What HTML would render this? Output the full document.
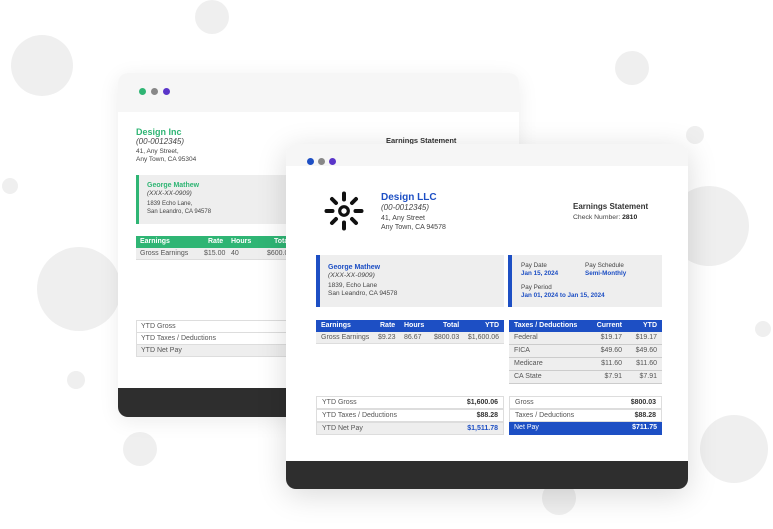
<!DOCTYPE html>
<html><head><meta charset="utf-8"><style>
*{margin:0;padding:0;box-sizing:border-box}
body{width:773px;height:529px;background:#fff;position:relative;overflow:hidden;font-family:"Liberation Sans",Arial,sans-serif;color:#333}
.c{position:absolute;border-radius:50%;background:#efefef}
.a{position:absolute;white-space:nowrap}
.card{position:absolute;background:#fff;border-radius:10px;overflow:hidden}
.hd{position:absolute;left:0;top:0;right:0;background:#f6f6f6}
.ft{position:absolute;left:0;right:0;bottom:0;background:#2e2e2e}
.dot{position:absolute;width:7px;height:7px;border-radius:50%}
.row{position:absolute;height:12px;font-size:7px;line-height:12px}
</style></head><body>
<div class="c" style="left:195px;top:0;width:34px;height:34px"></div>
<div class="c" style="left:11px;top:35px;width:62px;height:61px"></div>
<div class="c" style="left:615px;top:51px;width:34px;height:34px"></div>
<div class="c" style="left:2px;top:178px;width:16px;height:16px"></div>
<div class="c" style="left:686px;top:126px;width:18px;height:18px"></div>
<div class="c" style="left:669px;top:186px;width:80px;height:80px"></div>
<div class="c" style="left:37px;top:247px;width:84px;height:84px"></div>
<div class="c" style="left:755px;top:321px;width:16px;height:16px"></div>
<div class="c" style="left:67px;top:371px;width:18px;height:18px"></div>
<div class="c" style="left:123px;top:432px;width:34px;height:34px"></div>
<div class="c" style="left:542px;top:481px;width:34px;height:34px"></div>
<div class="c" style="left:700px;top:415px;width:68px;height:68px"></div>

<!-- back card -->
<div class="card" style="left:118px;top:73px;width:401px;height:344px;box-shadow:0 4px 20px rgba(0,0,0,.08)">
 <div class="hd" style="height:39px"></div>
 <div class="dot" style="left:21px;top:15px;background:#2fb574"></div>
 <div class="dot" style="left:33px;top:15px;background:#888"></div>
 <div class="dot" style="left:45px;top:15px;background:#5a35c9"></div>
 <div class="a" style="left:18px;top:54px;font-size:9px;font-weight:bold;color:#2fb574">Design Inc</div>
 <div class="a" style="left:18px;top:64px;font-size:8px;font-style:italic;color:#444">(00-0012345)</div>
 <div class="a" style="left:18px;top:75px;font-size:6.5px;line-height:8px;color:#444">41, Any Street,<br>Any Town, CA 95304</div>
 <div class="a" style="left:268px;top:63px;font-size:7.5px;font-weight:bold;color:#333">Earnings Statement</div>
 <div style="position:absolute;left:18px;top:102px;width:200px;height:49px;background:#eee;border-left:3px solid #2fb574"></div>
 <div class="a" style="left:29px;top:109px;font-size:7px;font-weight:bold;color:#2fb574">George Mathew</div>
 <div class="a" style="left:29px;top:117px;font-size:6.5px;font-style:italic;color:#444">(XXX-XX-0909)</div>
 <div class="a" style="left:29px;top:127px;font-size:6px;line-height:8px;color:#444">1839 Echo Lane,<br>San Leandro, CA 94578</div>
 <div class="row" style="left:18px;top:163px;width:200px;background:#2fb574;color:#fff;font-weight:bold"><span class="a" style="left:4px">Earnings</span><span class="a" style="left:72px">Rate</span><span class="a" style="left:95px">Hours</span><span class="a" style="left:138px">Total</span></div>
 <div class="row" style="left:18px;top:175px;width:200px;background:#eee;border-bottom:1px solid #ddd;color:#555"><span class="a" style="left:4px">Gross Earnings</span><span class="a" style="left:68px">$15.00</span><span class="a" style="left:95px">40</span><span class="a" style="left:131px">$600.00</span></div>
 <div class="row" style="left:18px;top:247px;width:200px;border:1px solid #ddd;color:#555;height:13px"><span class="a" style="left:4px">YTD Gross</span></div>
 <div class="row" style="left:18px;top:259px;width:200px;border:1px solid #ddd;color:#555;height:13px"><span class="a" style="left:4px">YTD Taxes / Deductions</span></div>
 <div class="row" style="left:18px;top:271px;width:200px;border:1px solid #ddd;background:#eee;color:#555;height:13px"><span class="a" style="left:4px">YTD Net Pay</span></div>
 <div class="ft" style="height:29px"></div>
</div>

<!-- front card -->
<div class="card" style="left:286px;top:144px;width:402px;height:345px;box-shadow:0 6px 30px rgba(0,0,0,.15)">
 <div class="hd" style="height:22px"></div>
 <div class="dot" style="left:21px;top:14px;background:#1d4fc4"></div>
 <div class="dot" style="left:32px;top:14px;background:#888"></div>
 <div class="dot" style="left:43px;top:14px;background:#5a35c9"></div>
 <svg style="position:absolute;left:38px;top:47px" width="40" height="40" viewBox="0 0 40 40"><g stroke="#111" stroke-width="4" stroke-linecap="round" fill="none"><circle cx="20" cy="20" r="4.3" stroke-width="3.2"/><path d="M20 2.5v6M20 31.5v6M2.5 20h6M31.5 20h6M8 8l4 4M28 28l4 4M32 8l-4 4M12 28l-4 4"/></g></svg>
 <div class="a" style="left:95px;top:48px;font-size:10px;font-weight:bold;color:#1d4fc4">Design LLC</div>
 <div class="a" style="left:95px;top:59px;font-size:8px;font-style:italic;color:#444">(00-0012345)</div>
 <div class="a" style="left:95px;top:71px;font-size:7px;line-height:8.5px;color:#444">41, Any Street<br>Any Town, CA 94578</div>
 <div class="a" style="left:287px;top:58px;font-size:8px;font-weight:bold;color:#333">Earnings Statement</div>
 <div class="a" style="left:287px;top:70px;font-size:6.8px;color:#444">Check Number: <b style="color:#222">2810</b></div>
 <div style="position:absolute;left:30px;top:111px;width:188px;height:52px;background:#eee;border-left:4px solid #1d4fc4"></div>
 <div class="a" style="left:42px;top:120px;font-size:7px;font-weight:bold;color:#1d4fc4">George Mathew</div>
 <div class="a" style="left:42px;top:128px;font-size:6.8px;font-style:italic;color:#444">(XXX-XX-0909)</div>
 <div class="a" style="left:42px;top:138px;font-size:6.5px;line-height:8px;color:#444">1839, Echo Lane<br>San Leandro, CA 94578</div>
 <div style="position:absolute;left:222px;top:111px;width:154px;height:52px;background:#eee;border-left:4px solid #1d4fc4"></div>
 <div class="a" style="left:235px;top:118px;font-size:6.3px;line-height:8px;color:#444">Pay Date<br><b style="color:#1d4fc4">Jan 15, 2024</b></div>
 <div class="a" style="left:299px;top:118px;font-size:6.3px;line-height:8px;color:#444">Pay Schedule<br><b style="color:#1d4fc4">Semi-Monthly</b></div>
 <div class="a" style="left:235px;top:140px;font-size:6.3px;line-height:8px;color:#444">Pay Period<br><b style="color:#1d4fc4">Jan 01, 2024 to Jan 15, 2024</b></div>

 <div class="row" style="left:30px;top:176px;width:188px;background:#1d4fc4;color:#fff;font-weight:bold"><span class="a" style="left:5px">Earnings</span><span class="a" style="left:64px">Rate</span><span class="a" style="left:88px">Hours</span><span class="a" style="left:127px">Total</span><span class="a" style="right:5px">YTD</span></div>
 <div class="row" style="left:30px;top:188px;width:188px;background:#eee;border-bottom:1px solid #ddd;color:#555"><span class="a" style="left:5px">Gross Earnings</span><span class="a" style="left:62px">$9.23</span><span class="a" style="left:88px">86.67</span><span class="a" style="left:118px">$800.03</span><span class="a" style="right:5px">$1,600.06</span></div>

 <div class="row" style="left:223px;top:176px;width:153px;background:#1d4fc4;color:#fff;font-weight:bold"><span class="a" style="left:5px">Taxes / Deductions</span><span class="a" style="right:40px">Current</span><span class="a" style="right:5px">YTD</span></div>
 <div class="row" style="left:223px;top:188px;width:153px;height:13px;background:#eee;border-bottom:1px solid #ccc;color:#555"><span class="a" style="left:5px">Federal</span><span class="a" style="right:40px">$19.17</span><span class="a" style="right:5px">$19.17</span></div>
 <div class="row" style="left:223px;top:201px;width:153px;height:13px;background:#eee;border-bottom:1px solid #ccc;color:#555"><span class="a" style="left:5px">FICA</span><span class="a" style="right:40px">$49.60</span><span class="a" style="right:5px">$49.60</span></div>
 <div class="row" style="left:223px;top:214px;width:153px;height:13px;background:#eee;border-bottom:1px solid #ccc;color:#555"><span class="a" style="left:5px">Medicare</span><span class="a" style="right:40px">$11.60</span><span class="a" style="right:5px">$11.60</span></div>
 <div class="row" style="left:223px;top:227px;width:153px;height:13px;background:#eee;border-bottom:1px solid #ccc;color:#555"><span class="a" style="left:5px">CA State</span><span class="a" style="right:40px">$7.91</span><span class="a" style="right:5px">$7.91</span></div>

 <div class="row" style="left:30px;top:252px;width:188px;height:13px;border:1px solid #ddd;color:#555"><span class="a" style="left:5px">YTD Gross</span><b class="a" style="right:5px;color:#333">$1,600.06</b></div>
 <div class="row" style="left:30px;top:265px;width:188px;height:13px;border:1px solid #ddd;color:#555"><span class="a" style="left:5px">YTD Taxes / Deductions</span><b class="a" style="right:5px;color:#333">$88.28</b></div>
 <div class="row" style="left:30px;top:278px;width:188px;height:13px;border:1px solid #ddd;background:#eee;color:#555"><span class="a" style="left:5px">YTD Net Pay</span><b class="a" style="right:5px;color:#1d4fc4">$1,511.78</b></div>
 <div class="row" style="left:223px;top:252px;width:153px;height:13px;border:1px solid #ddd;color:#555"><span class="a" style="left:5px">Gross</span><b class="a" style="right:5px;color:#333">$800.03</b></div>
 <div class="row" style="left:223px;top:265px;width:153px;height:13px;border:1px solid #ddd;color:#555"><span class="a" style="left:5px">Taxes / Deductions</span><b class="a" style="right:5px;color:#333">$88.28</b></div>
 <div class="row" style="left:223px;top:278px;width:153px;height:13px;background:#1d4fc4;color:#fff"><span class="a" style="left:5px">Net Pay</span><b class="a" style="right:5px">$711.75</b></div>
 <div class="ft" style="height:28px"></div>
</div>
</body></html>
